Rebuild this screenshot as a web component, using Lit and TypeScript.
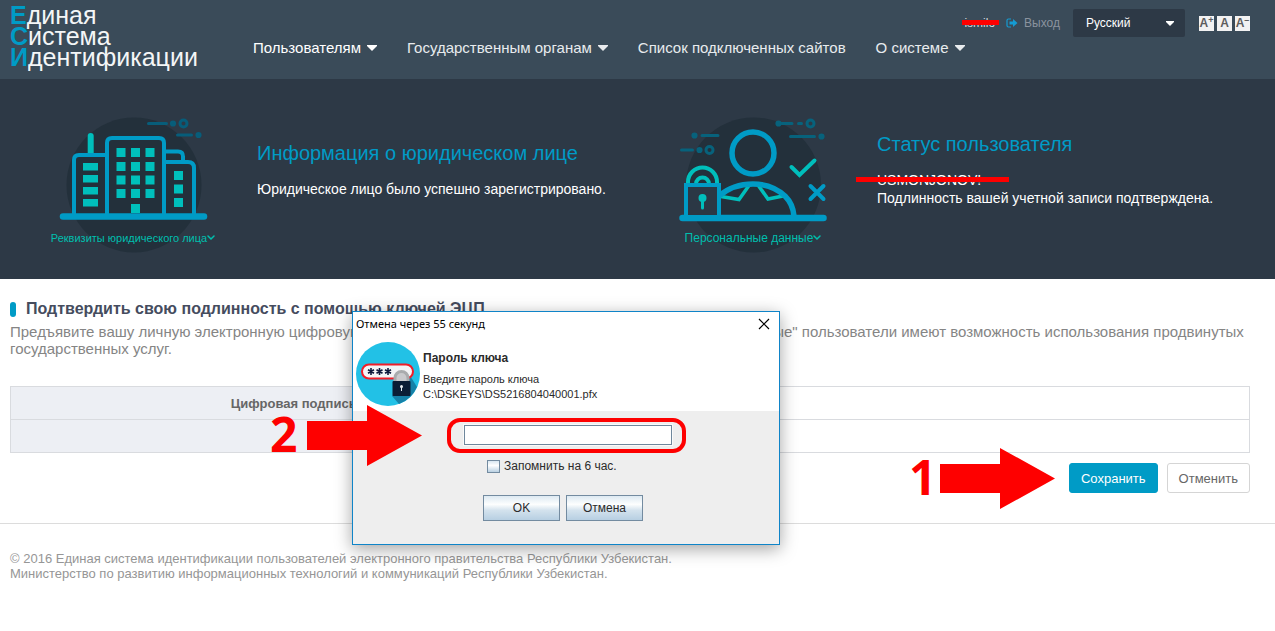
import { LitElement, html, css, svg } from "lit";
import { customElement } from "lit/decorators.js";

const caret = html`<svg class="caret" viewBox="0 0 10 6" width="10" height="6" aria-hidden="true"><path d="M0 0h10v1L5 6 0 1z" fill="currentColor" /></svg>`;

const windows = (xs: number[], ys: number[], w: number, h: number) =>
  ys.map((y) => xs.map((x) => svg`<rect x=${x} y=${y} width=${w} height=${h} />`));

const companyArt = html`<svg viewBox="40 100 190 160" width="190" height="160" aria-hidden="true">
  <circle cx="134" cy="185" r="67.5" fill="#23303b" />
  <g stroke="#075d7a" stroke-width="3" stroke-linecap="round" fill="none">
    <path d="M148.500 123.500h18M177.500 135h14" />
    <circle cx="183.500" cy="123.500" r="3.500" />
    <circle cx="173" cy="123.500" r="1.600" />
    <circle cx="198.500" cy="135" r="1.600" />
  </g>
  <path d="M90.700 136v18" stroke="#00bfbc" stroke-width="6" stroke-linecap="round" />
  <g fill="none" stroke="#009bc6" stroke-width="4">
    <path d="M74 215v-55q0-5 5-5h28M107 215v-72q0-5 5-5h47q5 0 5 5v72M165 151.500h13q5 0 5 5v6M165 162h23q6 0 6 6v47" />
    <path d="M63 216.500h141" stroke-width="6.500" stroke-linecap="round" />
  </g>
  <g fill="#00bfbc">
    ${windows([83], [163, 175, 187, 199], 15, 7.5)}
    ${windows([116.5, 131, 145.5], [148, 162, 175.5, 189], 9, 9)}
    ${windows([174], [171, 184.500, 198], 9, 9)}
    <rect x="131" y="204" width="9" height="9" />
  </g>
</svg>`;

const personArt = html`<svg viewBox="660 100 190 160" width="190" height="160" aria-hidden="true">
  <circle cx="753.500" cy="185" r="67.500" fill="#23303b" />
  <g stroke="#07627c" stroke-width="3" stroke-linecap="round" fill="none">
    <path d="M780 123.500h12M798.500 123.500h3M790.500 136.500h24M702 135.500h16M681.500 150h11" />
    <circle cx="810.500" cy="123.500" r="3.500" />
    <circle cx="709.500" cy="150" r="3.500" />
    <circle cx="778.500" cy="123.500" r="1.600" />
    <circle cx="821.500" cy="136.500" r="1.600" />
    <circle cx="694.500" cy="135.500" r="1.600" />
    <circle cx="699.500" cy="150" r="1.600" />
  </g>
  <g fill="none" stroke="#00bfbc" stroke-width="3.500">
    <path d="M721 196.500l18 3 10-14M758 185l10 14 15-3" />
    <path d="M791.500 167l8 8 15-14.500" stroke-linecap="round" stroke-width="4" />
    <path d="M688 184v-2a14 14 0 0 1 29 0v2" stroke-width="4" />
    <path d="M696 184a6.500 6.500 0 0 1 13 0" stroke-width="4" />
  </g>
  <g fill="none" stroke="#009bc6" stroke-width="5.500">
    <circle cx="753" cy="153" r="21" />
    <path d="M719 196q14-12 34-12 19 0 32 12 8 8 9 20" />
    <path d="M682.500 218h141" stroke-width="6.500" stroke-linecap="round" />
    <path d="M810.500 186l13 13M823.500 186l-13 13" stroke-width="4" stroke-linecap="round" />
    <rect x="686" y="185" width="33" height="32" stroke-width="4" fill="#2b3845" />
  </g>
  <circle cx="702.500" cy="198" r="4" fill="#00bfbc" />
  <path d="M702.500 198v10" stroke="#00bfbc" stroke-width="3" stroke-linecap="round" />
</svg>`;

const chevron = html`<svg viewBox="0 0 8 6" width="8" height="6" aria-hidden="true"><path d="M1 1l3 3 3-3" fill="none" stroke="currentColor" stroke-width="1.500" stroke-linecap="round" /></svg>`;

const passwordArt = html`<svg viewBox="0 0 64 64" width="64" height="64" aria-hidden="true">
  <circle cx="32" cy="32" r="32" fill="#22c1e6" />
  <path d="M53 32l8 13a32 32 0 0 1-18 17l-7-8z" fill="#1681a8" />
  <rect x="6" y="22.500" width="51" height="14" rx="7" fill="#f4f4f6" stroke="#f01d28" stroke-width="2" />
  <g stroke="#101a3c" stroke-width="1.600">
    <path d="M15 26v7M12 27.700l6 3.600M18 27.700l-6 3.600M23.500 26v7M20.500 27.700l6 3.600M26.500 27.700l-6 3.600M32 26v7M29 27.700l6 3.600M35 27.700l-6 3.600" />
  </g>
  <path d="M39 40v-4a6.500 6.500 0 0 1 13 0v4" fill="#c9c9cc" stroke="#a9abad" stroke-width="3" />
  <rect x="36.500" y="39" width="18" height="15" rx="1" fill="#0b1d35" />
  <circle cx="45.500" cy="44.500" r="1.500" fill="#e8ecf0" /><path d="M45.500 45v4" stroke="#e8ecf0" />
</svg>`;

const arrow = html`<svg viewBox="0 0 115 61" width="115" height="61" aria-hidden="true"><path d="M0 16h60V0l55 30.500L60 61V45H0z" fill="#fe0000" /></svg>`;

@customElement("key-dialog")
export class KeyDialog extends LitElement {
  static styles = css`
    :host { display: block; box-sizing: border-box; border: 1px solid #0f84c8; background: #eeeeee; box-shadow: 0 4px 16px rgba(0, 0, 0, 0.36); font-size: 12px; color: #2b2b2b; }
    .title { display: flex; justify-content: space-between; align-items: center; height: 24px; padding: 0 9px 0 3px; background: #fff; font: 11px/24px "Noto Sans", sans-serif; color: #000; }
    .close { display: flex; border: 0; padding: 0; background: none; color: #000; }
    .intro { display: flex; gap: 3px; padding: 6px 3px 5px; background: #fff; }
    .intro svg { flex: none; }
    .copy { padding-top: 8px; font-size: 11px; line-height: 15px; }
    h2 { margin: 0 0 6px; font-size: 12px; line-height: 16px; }
    p { margin: 0; }
    .form { display: flex; flex-direction: column; align-items: flex-start; padding: 7px 0 23px 94px; }
    .ring { box-sizing: border-box; display: flex; justify-content: center; align-items: center; width: 239px; height: 35px; padding: 0 0 2px 2px; border: 4px solid #fe0000; border-radius: 13px; }
    .ring input { box-sizing: border-box; width: 208px; height: 20px; border: 1px solid #6f879c; padding: 0 3px; background: #fff; outline: 1px solid #fafafa; }
    .remember { display: flex; align-items: center; gap: 4px; margin: 6px 0 0 40px; line-height: 14px; }
    .remember input { appearance: none; box-sizing: border-box; width: 13px; height: 13px; margin: 0; border: 1px solid #738ba0; background: linear-gradient(#d8e6f0, #fff 40%, #b9d0e2); }
    .actions { display: flex; gap: 6px; margin: 22px 0 0 36px; }
    .actions button { width: 77px; height: 26px; padding: 0; border: 1px solid #738ba0; background: linear-gradient(#dde9f2, #fdfefe 35%, #d3e2ed 60%, #b7cfe2); font: 12px "Liberation Sans", Arial, sans-serif; color: #2b2b2b; }
  `;

  render() {
    return html`
      <div class="title">
        <span>Отмена через 55 секунд</span>
        <button class="close" aria-label="Закрыть"><svg viewBox="0 0 12 12" width="12" height="12"><path d="M1 1l10 10M11 1L1 11" stroke="currentColor" stroke-width="1.200" /></svg></button>
      </div>
      <div class="intro">
        ${passwordArt}
        <div class="copy">
          <h2>Пароль ключа</h2>
          <p>Введите пароль ключа</p>
          <p>C:\\DSKEYS\\DS5216804040001.pfx</p>
        </div>
      </div>
      <div class="form">
        <div class="ring"><input type="password" aria-label="Пароль ключа" /></div>
        <label class="remember"><input type="checkbox" />Запомнить на 6 час.</label>
        <div class="actions"><button>OK</button><button>Отмена</button></div>
      </div>
    `;
  }
}

@customElement("app-root")
export class AppRoot extends LitElement {
  static styles = css`
    :host { display: block; position: relative; background: #fff; font-family: "Liberation Sans", Arial, sans-serif; }
    a { color: inherit; text-decoration: none; }
    header { display: flex; box-sizing: border-box; height: 79px; padding: 0 25px 0 10px; background: #3a4b59; color: #e8ebee; }
    .logo { flex: none; width: 243px; padding-top: 5px; font-size: 25px; line-height: 21px; color: #f4f6f7; }
    .logo span { display: block; }
    .logo b { color: #009bc6; }
    .bar { flex: 1; display: flex; flex-direction: column; padding-top: 9px; }
    .tools { align-self: flex-end; display: flex; align-items: center; font-size: 12px; color: #8b939f; }
    .user { position: relative; margin-right: 11px; color: #d5d9dd; }
    .struck::after { content: ""; position: absolute; background: #fe0000; }
    .user::after { left: -2px; right: -4px; top: 4px; height: 5px; }
    .exit { display: flex; align-items: center; gap: 6px; margin-right: 13px; }
    .exit svg { color: #149bd2; }
    .lang { position: relative; display: flex; align-items: center; margin-right: 14px; color: #fff; }
    .lang select { appearance: none; width: 112px; height: 28px; padding: 0 13px; border: 0; border-radius: 2px; background: #2d3946; color: #fff; font: 12px "Liberation Sans", Arial, sans-serif; }
    .lang svg { position: absolute; right: 11px; width: 8px; height: 5px; pointer-events: none; }
    .sizes { display: flex; gap: 3px; }
    .sizes button { display: flex; justify-content: center; align-items: flex-start; width: 15px; height: 15px; padding: 0; border: 0; background: #f2f2f2; color: #5d5d5d; font: bold 12px/15px "Liberation Sans", Arial, sans-serif; }
    .sizes sup { font-size: 9px; line-height: 9px; }
    nav { display: flex; gap: 30px; padding-top: 2px; font-size: 15px; line-height: 18px; }
    nav a { display: flex; align-items: center; gap: 6px; }
    nav .active { color: #fff; }

    .hero { display: grid; grid-template-columns: 1fr 1fr; padding: 0 25px 0 10px; background: #2d3946; color: #fff; }
    .card { display: flex; height: 200px; }
    .tile { display: grid; flex: none; margin: 21px 27px 0 30px; width: 190px; height: 160px; color: #00bfae; font-size: 11px; }
    .tile svg, .tile span { grid-area: 1 / 1; }
    .tile span { display: flex; align-items: center; justify-content: center; align-self: end; padding: 0 4px 15px 0; line-height: 14px; }
    .tile.large { font-size: 12px; }
    .info { align-self: center; padding-bottom: 20px; font-size: 14px; line-height: 18px; }
    .info h2 { margin: 0 0 15px; font-size: 20px; line-height: 24px; font-weight: normal; color: #009bc6; }
    .info p { margin: 0; }
    .name { position: relative; width: max-content; }
    .name::after { left: -21px; right: -28px; top: 6px; height: 5px; }

    main { padding: 21px 25px 0 10px; }
    h1 { display: flex; align-items: center; gap: 10px; margin: 0; font-size: 16px; line-height: 18px; color: #454c5e; }
    h1::before { content: ""; width: 6px; height: 15px; border-radius: 3px; background: #009bc6; }
    .lead { margin: 5px 0 29px; font-size: 15px; line-height: 17px; color: #858585; }
    table { width: 100%; border-collapse: collapse; }
    th, td { box-sizing: border-box; height: 33px; padding: 0 25px; border: 1px solid #d9dbdf; font-size: 13px; }
    th { width: 30%; text-align: right; background: #edeff4; color: #666; }
    .actions { display: flex; justify-content: flex-end; gap: 9px; padding: 10px 0 30px; }
    .actions button { height: 30px; padding: 0 11px; border: 1px solid #d5d5d5; border-radius: 3px; background: #fff; color: #666; font: 13px "Liberation Sans", Arial, sans-serif; }
    .actions .save { border-color: #009bc6; background: #009bc6; color: #fff; }
    footer { border-top: 1px solid #dcdcdc; padding: 27px 10px; font-size: 13px; line-height: 15px; color: #969696; }
    footer p { margin: 0; }

    key-dialog { position: absolute; left: 352px; top: 311px; width: 428px; }
    .step { position: absolute; display: flex; align-items: flex-start; font: bold 48px/57px "Open Sans", sans-serif; color: #fe0000; }
    .first { left: 909px; top: 448px; gap: 4px; }
    .second { left: 270px; top: 405px; gap: 10px; }
  `;

  render() {
    return html`
      <header>
        <a class="logo" href="#"><span><b>Е</b>диная</span><span><b>С</b>истема</span><span><b>И</b>дентификации</span></a>
        <div class="bar">
          <div class="tools">
            <span class="user struck">ismilo</span>
            <a class="exit" href="#"><svg viewBox="0 0 12 10" width="12" height="10" aria-hidden="true"><path d="M5 1H2.500Q1 1 1 2.500v5Q1 9 2.500 9H5" fill="none" stroke="currentColor" stroke-width="1.200" /><path d="M3.500 3.500H7V1l4.500 4L7 9V6.500H3.500z" fill="currentColor" /></svg>Выход</a>
            <label class="lang"><select aria-label="Язык"><option>Русский</option></select>${caret}</label>
            <div class="sizes"><button>A<sup>+</sup></button><button>A</button><button>A<sup>–</sup></button></div>
          </div>
          <nav>
            <a class="active" href="#">Пользователям ${caret}</a>
            <a href="#">Государственным органам ${caret}</a>
            <a href="#">Список подключенных сайтов</a>
            <a href="#">О системе ${caret}</a>
          </nav>
        </div>
      </header>
      <section class="hero">
        <div class="card">
          <a class="tile" href="#">${companyArt}<span>Реквизиты юридического лица${chevron}</span></a>
          <div class="info"><h2>Информация о юридическом лице</h2><p>Юридическое лицо было успешно зарегистрировано.</p></div>
        </div>
        <div class="card">
          <a class="tile large" href="#">${personArt}<span>Персональные данные${chevron}</span></a>
          <div class="info"><h2>Статус пользователя</h2><p class="name struck">USMONJONOV!</p><p>Подлинность вашей учетной записи подтверждена.</p></div>
        </div>
      </section>
      <main>
        <h1>Подтвердить свою подлинность с помощью ключей ЭЦП</h1>
        <p class="lead">Предъявите вашу личную электронную цифровую подпись для подтверждения личности, т.к. "Подтвержденные" пользователи имеют возможность использования продвинутых государственных услуг.</p>
        <table>
          <tr><th scope="row">Цифровая подпись</th><td></td></tr>
          <tr><th scope="row"></th><td></td></tr>
        </table>
        <div class="actions"><button class="save">Сохранить</button><button>Отменить</button></div>
      </main>
      <footer>
        <p>© 2016 Единая система идентификации пользователей электронного правительства Республики Узбекистан.</p>
        <p>Министерство по развитию информационных технологий и коммуникаций Республики Узбекистан.</p>
      </footer>
      <key-dialog></key-dialog>
      <div class="step first"><span>1</span>${arrow}</div>
      <div class="step second"><span>2</span>${arrow}</div>
    `;
  }
}
